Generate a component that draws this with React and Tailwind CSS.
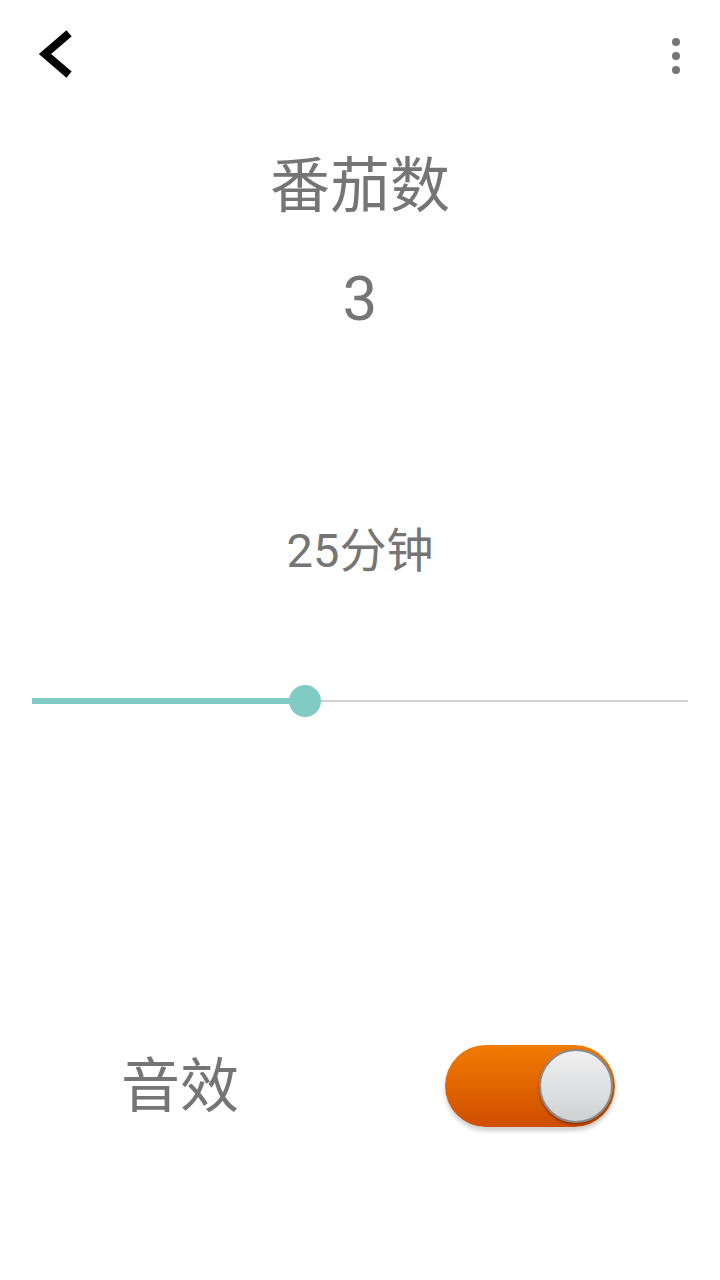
import React from 'react';

const font = { fontFamily: 'Roboto, "Noto Sans CJK SC", sans-serif' };

export default function App() {
    return (
        <div className="w-[720px] h-[1280px] bg-white flex flex-col text-[#757575]" style={font}>

            {/* TOP BAR */}
            <div className="h-[110px] flex items-center justify-between pl-[34px] pr-[40px]">
                <svg width="40" height="50" viewBox="0 0 40 50">
                    <path d="M32 6 L11 24 L32 42" fill="none" stroke="#000" strokeWidth="8" strokeLinecap="square" strokeLinejoin="miter" />
                </svg>
                <div className="flex flex-col gap-[6px] pt-[2px]">
                    <span className="w-[8px] h-[8px] rounded-full bg-[#757575]" />
                    <span className="w-[8px] h-[8px] rounded-full bg-[#757575]" />
                    <span className="w-[8px] h-[8px] rounded-full bg-[#757575]" />
                </div>
            </div>

            {/* TITLE + COUNT */}
            <div className="mt-[47px] text-center text-[60px] leading-none">番茄数</div>
            <div className="mt-[51px] text-center text-[62px] leading-none">3</div>

            {/* DURATION */}
            <div className="mt-[197px] text-center text-[47px] leading-none">25分钟</div>

            {/* SLIDER */}
            <div className="mt-[107px] h-[40px] mx-[32px] flex items-center">
                <div className="w-[273px] h-[6px] bg-[#80cbc4]" />
                <div className="w-[32px] h-[32px] rounded-full bg-[#80cbc4] -ml-[16px] shrink-0" />
                <div className="flex-1 h-[2px] bg-[#d0d0d0]" />
            </div>

            {/* SOUND ROW */}
            <div className="mt-[315px] h-[100px] flex items-center pl-[121px] pr-[105px] justify-between">
                <span className="text-[59px] leading-none">音效</span>
                <div className="w-[170px] h-[82px] rounded-full bg-gradient-to-b from-[#f27b00] to-[#cf4d00] shadow-[0_4px_4px_rgba(0,0,0,0.18)] flex items-center justify-end pr-[2px]">
                    <div className="w-[74px] h-[74px] rounded-full bg-gradient-to-b from-[#f1f1f1] to-[#cfd1d3] border-[2px] border-[#8a8a8a] shadow-[0_2px_3px_rgba(0,0,0,0.35)]" />
                </div>
            </div>
        </div>
    );
}
